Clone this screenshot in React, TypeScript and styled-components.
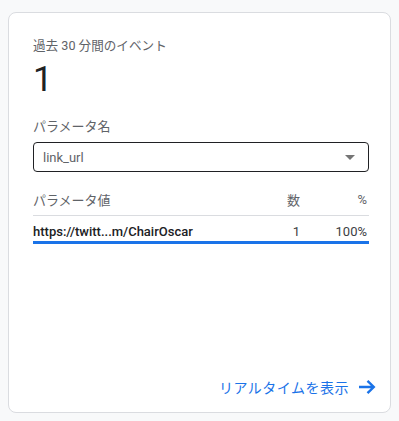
import React from 'react';
import styled, { createGlobalStyle } from 'styled-components';

const GlobalStyle = createGlobalStyle`
  html, body {
    margin: 0;
    padding: 0;
    background: #f8f9fa;
  }
  body {
    font-family: Roboto, 'Noto Sans CJK JP', sans-serif;
    color: #202124;
  }
`;

const Page = styled.div`
  padding: 12px 8px 8px 8px;
  width: 399px;
  height: 421px;
  box-sizing: border-box;
`;

const Card = styled.div`
  background: #fff;
  border: 1px solid #dadce0;
  border-radius: 8px;
  height: 401px;
  box-sizing: border-box;
  padding: 25px 21px 15px 24px;
  display: flex;
  flex-direction: column;
`;

const Title = styled.div`
  font-size: 12.6px;
  line-height: 16px;
  color: #5f6368;
`;

const BigNumber = styled.div`
  font-size: 35px;
  line-height: 44px;
  color: #202124;
  margin-top: 4px;
`;

const FieldLabel = styled.div`
  font-size: 13px;
  line-height: 18px;
  color: #5f6368;
  margin-top: 16px;
`;

const Select = styled.div`
  margin-top: 6px;
  height: 30px;
  border: 1px solid #202124;
  border-radius: 4px;
  box-sizing: border-box;
  display: flex;
  align-items: center;
  justify-content: space-between;
  padding: 0 13px 0 9px;
  font-size: 13px;
  color: #5f6368;
`;

const Caret = styled.span`
  width: 0;
  height: 0;
  margin-top: 1px;
  border-left: 5px solid transparent;
  border-right: 5px solid transparent;
  border-top: 5px solid #757575;
`;

const Table = styled.div`
  margin-top: 11px;
`;

const Row = styled.div<{ $header?: boolean }>`
  display: grid;
  grid-template-columns: 1fr 40px 67px;
  align-items: center;
  box-sizing: border-box;
  height: ${(p) => (p.$header ? '33px' : '28px')};
  padding: ${(p) => (p.$header ? '0 2px 0 0' : '5px 2px 0 0')};
  font-size: 13px;
  color: ${(p) => (p.$header ? '#5f6368' : '#202124')};
  border-bottom: ${(p) => (p.$header ? '1px solid #dadce0' : '3px solid #1a73e8')};
  font-weight: ${(p) => (p.$header ? 400 : 500)};
`;

const Cell = styled.span<{ $right?: boolean; $dim?: boolean }>`
  text-align: ${(p) => (p.$right ? 'right' : 'left')};
  color: ${(p) => (p.$dim ? '#3c4043' : 'inherit')};
  font-weight: ${(p) => (p.$dim ? 400 : 'inherit')};
  white-space: nowrap;
`;

const Footer = styled.div`
  margin-top: auto;
  margin-right: -7px;
  display: flex;
  justify-content: flex-end;
  align-items: center;
  gap: 9px;
  color: #1a73e8;
  font-size: 14px;
  letter-spacing: 0.5px;
`;

const Arrow = () => (
  <svg width="18" height="16" viewBox="0 0 18 16" fill="none" stroke="#1a73e8" strokeWidth="2.4">
    <path d="M1 8h15M9.5 1.8L15.8 8l-6.3 6.2" />
  </svg>
);

export default function App() {
  return (
    <>
      <GlobalStyle />
      <Page>
        <Card>
          <Title>過去 30 分間のイベント</Title>
          <BigNumber>1</BigNumber>
          <FieldLabel>パラメータ名</FieldLabel>
          <Select>
            <span>link_url</span>
            <Caret />
          </Select>
          <Table>
            <Row $header>
              <Cell>パラメータ値</Cell>
              <Cell $right>数</Cell>
              <Cell $right>%</Cell>
            </Row>
            <Row>
              <Cell>https://twitt...m/ChairOscar</Cell>
              <Cell $right $dim>1</Cell>
              <Cell $right $dim>100%</Cell>
            </Row>
          </Table>
          <Footer>
            <span>リアルタイムを表示</span>
            <Arrow />
          </Footer>
        </Card>
      </Page>
    </>
  );
}
